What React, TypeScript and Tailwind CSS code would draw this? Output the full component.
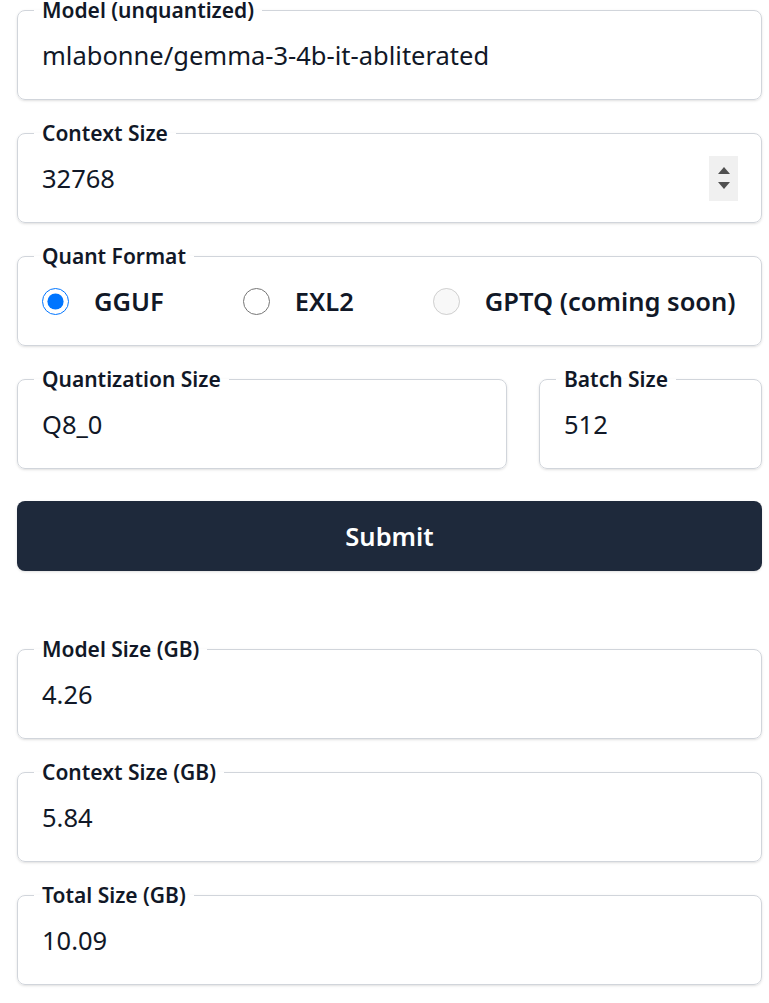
import React from 'react';

const font = { fontFamily: '"Noto Sans", "Open Sans", sans-serif' };

function Field({ label, children, className = '' }: { label: string; children: React.ReactNode; className?: string }) {
  return (
    <fieldset className={`rounded-lg border border-[#d1d5db] bg-white px-4 pt-[6px] pb-[16px] shadow-sm ${className}`}>
      <legend className="px-2 text-[21px] font-semibold leading-[22px] text-[#111827]">{label}</legend>
      {children}
    </fieldset>
  );
}

function TextValue({ value }: { value: string }) {
  return (
    <input
      readOnly
      value={value}
      className="h-[56px] w-full bg-transparent px-2 text-[25.5px] text-[#111827] outline-none"
    />
  );
}

function Radio({ label, checked, disabled }: { label: string; checked?: boolean; disabled?: boolean }) {
  return (
    <label className="flex items-center gap-[25px]">
      <input
        type="radio"
        name="fmt"
        defaultChecked={checked}
        disabled={disabled}
        className="m-0 h-[27px] w-[27px]"
      />
      <span className="text-[25.5px] font-semibold text-[#111827]">{label}</span>
    </label>
  );
}

export default function App() {
  return (
    <div className="min-h-screen bg-white" style={font}>
      <div className="-mt-px ml-[17px] flex w-[745px] flex-col gap-[22px] pb-8">
        <Field label="Model (unquantized)">
          <TextValue value="mlabonne/gemma-3-4b-it-abliterated" />
        </Field>

        <Field label="Context Size">
          <div className="flex items-center">
            <TextValue value="32768" />
            <div className="mr-[7px] flex h-[45px] w-[29px] shrink-0 flex-col items-center justify-center gap-[8px] bg-[#f0f0f0]">
              <div className="h-0 w-0 border-x-[6px] border-b-[7px] border-x-transparent border-b-[#505050]" />
              <div className="h-0 w-0 border-x-[6px] border-t-[7px] border-x-transparent border-t-[#505050]" />
            </div>
          </div>
        </Field>

        <Field label="Quant Format">
          <div className="flex h-[56px] items-center gap-[79px] pl-2">
            <Radio label="GGUF" checked />
            <Radio label="EXL2" />
            <Radio label="GPTQ (coming soon)" disabled />
          </div>
        </Field>

        <div className="flex gap-[32px]">
          <Field label="Quantization Size" className="w-[490px]">
            <TextValue value="Q8_0" />
          </Field>
          <Field label="Batch Size" className="flex-1">
            <TextValue value="512" />
          </Field>
        </div>

        <button className="mt-[10px] h-[70px] w-full rounded-lg bg-[#1e293b] text-[25.5px] font-semibold text-white shadow-sm">
          Submit
        </button>

        <div className="mt-[45px] flex flex-col gap-[22px]">
          <Field label="Model Size (GB)">
            <TextValue value="4.26" />
          </Field>
          <Field label="Context Size (GB)">
            <TextValue value="5.84" />
          </Field>
          <Field label="Total Size (GB)">
            <TextValue value="10.09" />
          </Field>
        </div>
      </div>
    </div>
  );
}
